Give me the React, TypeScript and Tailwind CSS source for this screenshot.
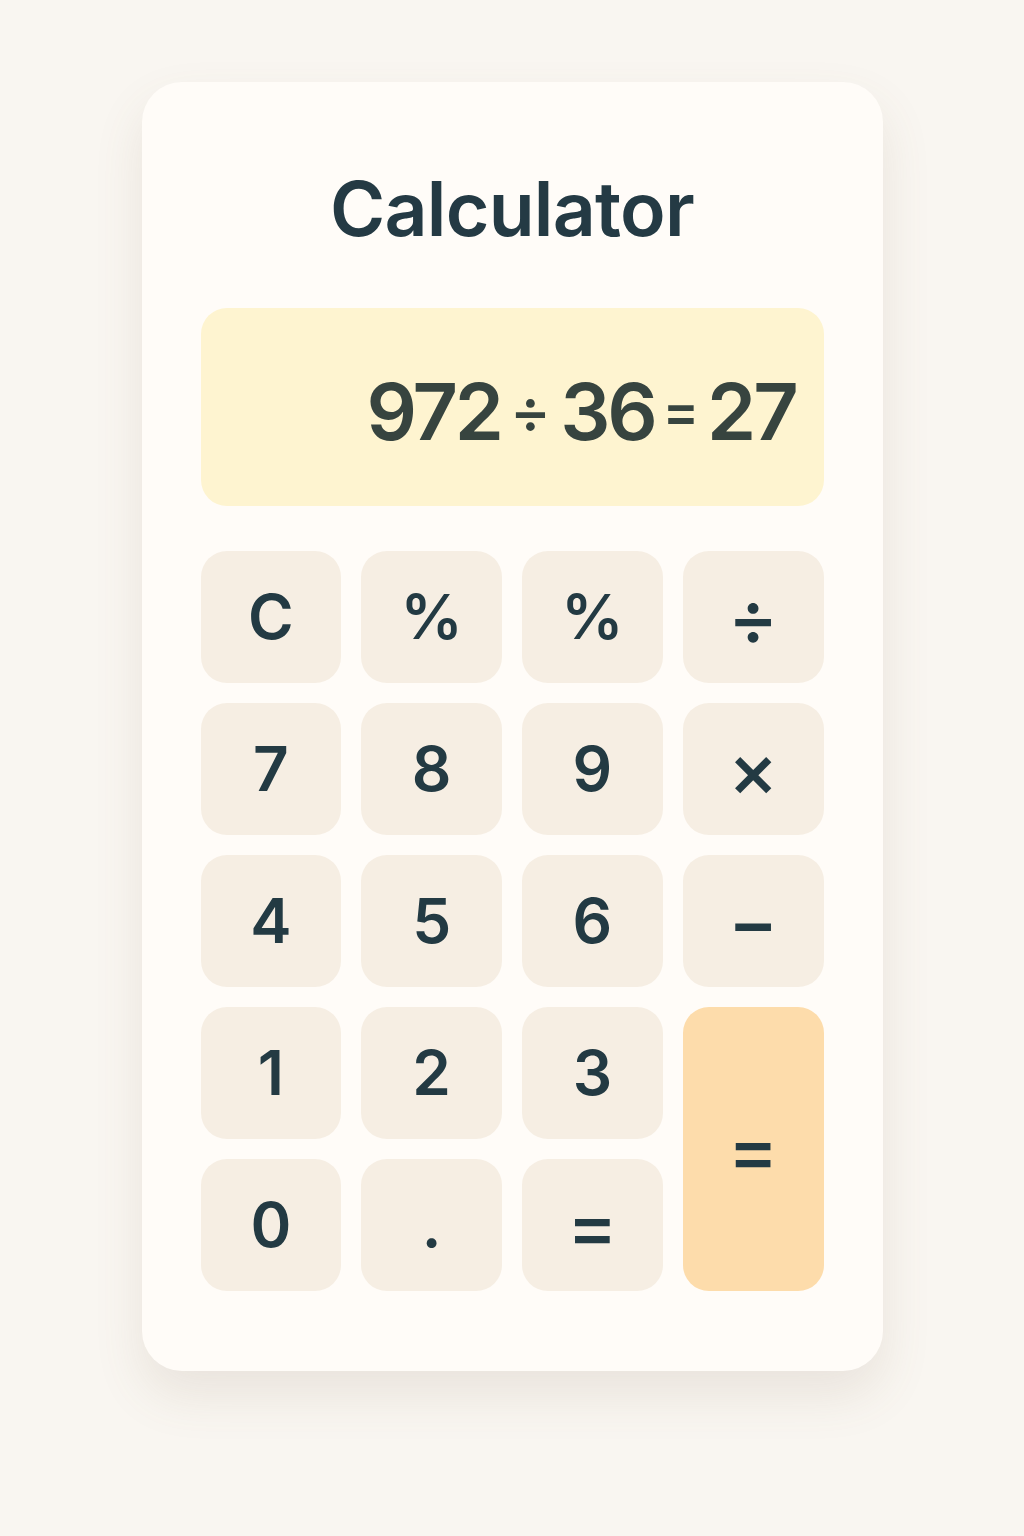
import React from "react";

const keys: { label: string; op?: boolean }[] = [
  { label: "C" },
  { label: "%" },
  { label: "%" },
  { label: "÷", op: true },
  { label: "7" },
  { label: "8" },
  { label: "9" },
  { label: "×", op: true },
  { label: "4" },
  { label: "5" },
  { label: "6" },
  { label: "−", op: true },
  { label: "1" },
  { label: "2" },
  { label: "3" },
];

function Key({ label, op = false, className = "" }: { label: string; op?: boolean; className?: string }) {
  return (
    <button
      className={
        "flex items-center justify-center rounded-[26px] bg-[#f6eee3] leading-none text-[#233a43] " +
        (op ? "text-[76px] font-medium " : "text-[62px] font-semibold ") +
        className
      }
    >
      {label}
    </button>
  );
}

export default function App() {
  return (
    <div
      className="min-h-[1536px] w-full bg-[#f9f6f1] pt-[82px]"
      style={{ fontFamily: "Inter, 'Liberation Sans', sans-serif" }}
    >
      <div className="mx-auto flex w-[741px] flex-col rounded-[40px] bg-[#fffcf8] px-[59px] pb-[80px] pt-[89px] shadow-[0_24px_50px_rgba(120,100,70,0.12)]">
        <h1 className="text-center text-[75px] font-semibold leading-none tracking-[-0.01em] text-[#243a44]">
          Calculator
        </h1>
        <div className="mt-[62px] flex h-[198px] items-center justify-end rounded-[26px] bg-[#fef4d0] pr-[28px] pt-[8px]">
          <div className="flex items-center text-[79px] font-semibold leading-none tracking-[-0.04em] text-[#37443f]">
            <span>972</span>
            <span className="mx-[9px] text-[62px] font-medium tracking-normal">÷</span>
            <span>36</span>
            <span className="mx-[8px] text-[54px] font-semibold tracking-normal">=</span>
            <span>27</span>
          </div>
        </div>
        <div className="mt-[45px] grid grid-cols-4 grid-rows-[repeat(5,132px)] gap-x-[20px] gap-y-[20px]">
          {keys.map((k, i) => (
            <Key key={i} label={k.label} op={k.op} />
          ))}
          <Key label="=" op className="col-start-4 row-start-4 row-span-2 bg-[#fddcab]" />
          <Key label="0" className="col-start-1 row-start-5" />
          <Key label="." className="col-start-2 row-start-5" />
          <Key label="=" op className="col-start-3 row-start-5" />
        </div>
      </div>
    </div>
  );
}
